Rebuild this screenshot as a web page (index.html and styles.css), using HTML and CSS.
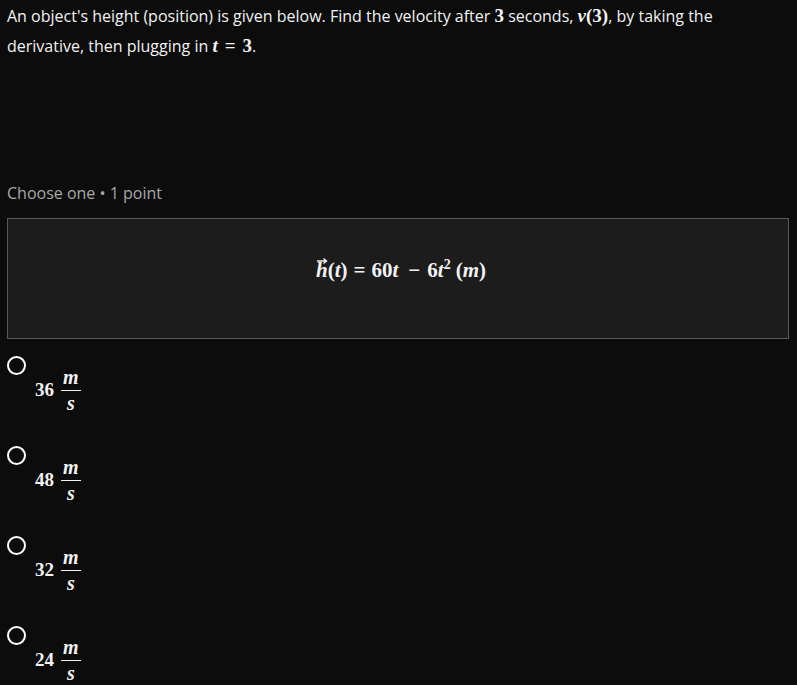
FILE: index.html
```html
<!DOCTYPE html>
<html>
<head>
<meta charset="utf-8">
<link rel="stylesheet" href="styles.css">
</head>
<body>
<div class="page">
  <p class="question">An object's height (position) is given below. Find the velocity after <span class="m b">3</span> seconds, <span class="m bi">v</span><span class="m b">(3)</span>, by taking the derivative, then plugging in <span class="m bi">t</span><span class="m b op">=</span><span class="m b">3</span>.</p>
  <div class="meta">Choose one • 1 point</div>
  <div class="box">
    <div class="eq"><span class="vec bi">h<svg class="arrow" width="12" height="7" viewBox="0 0 12 7"><path d="M1 4H10M7.5 1.5L10.5 4L7.5 6.5" fill="none" stroke="#f2f2f2" stroke-width="1.4"/></svg></span><span class="b">(</span><span class="bi">t</span><span class="b">)</span><span class="b op">=</span><span class="b">60</span><span class="bi">t</span><span class="b op wide">&#8722;</span><span class="b">6</span><span class="bi">t</span><sup class="b">2</sup><span class="b sp">(</span><span class="bi">m</span><span class="b">)</span></div>
  </div>
  <div class="options">
    <div class="opt"><span class="radio"></span><span class="ans"><span class="num">36</span><span class="frac"><span class="top">m</span><span class="bot">s</span></span></span></div>
    <div class="opt"><span class="radio"></span><span class="ans"><span class="num">48</span><span class="frac"><span class="top">m</span><span class="bot">s</span></span></span></div>
    <div class="opt"><span class="radio"></span><span class="ans"><span class="num">32</span><span class="frac"><span class="top">m</span><span class="bot">s</span></span></span></div>
    <div class="opt"><span class="radio"></span><span class="ans"><span class="num">24</span><span class="frac"><span class="top">m</span><span class="bot">s</span></span></span></div>
  </div>
</div>
</body>
</html>
```
FILE: styles.css
```css
html, body {
  margin: 0;
  padding: 0;
  background: #0c0c0c;
}
.page {
  padding: 1px 8px 0 7px;
  font-family: "Open Sans", sans-serif;
  color: #f2f2f2;
  font-size: 16px;
}
.question {
  margin: 0;
  line-height: 30px;
  width: 745px;
}
.m { font-family: "Liberation Serif", serif; font-size: 19px; line-height: 20px; }
.b { font-weight: bold; }
.bi { font-weight: bold; font-style: italic; }
.op { margin: 0 7px; }
.meta {
  margin-top: 120px;
  color: #a8a8a8;
  line-height: 24px;
}
.box {
  margin-top: 13px;
  background: #1c1c1c;
  border: 1px solid #595959;
  display: flex;
  justify-content: center;
  padding-top: 38px;
  box-sizing: border-box;
  height: 121px;
  width: 782px;
}
.eq {
  font-family: "Liberation Serif", serif;
  font-size: 21px;
  line-height: 26px;
  color: #f2f2f2;
  padding-left: 6px;
}
.eq .vec { position: relative; display: inline-block; }
.eq .arrow {
  position: absolute;
  left: 0;
  top: 0;
}
.eq .op { margin: 0 6px; }
.eq .wide { margin: 0 7px 0 10px; }
.eq .sp { margin-left: 5px; }
.eq sup { font-size: 14px; line-height: 0; }
.options {
  display: flex;
  flex-direction: column;
  margin-top: 17px;
}
.opt {
  height: 90px;
  display: flex;
  flex-direction: column;
}
.radio {
  width: 15px;
  height: 15px;
  border: 2px solid #fff;
  border-radius: 50%;
}
.ans {
  display: flex;
  align-items: center;
  margin-left: 28px;
  margin-top: -8px;
  font-family: "Liberation Serif", serif;
  font-weight: bold;
  font-size: 19px;
  color: #f2f2f2;
}
.num { margin-right: 7px; }
.frac {
  display: inline-flex;
  flex-direction: column;
  align-items: center;
  font-style: italic;
  font-size: 20px;
  line-height: 20px;
}
.frac .top {
  border-bottom: 1.5px solid #f2f2f2;
  padding: 0 2px 3px;
}
.frac .bot { padding-top: 2px; }
```
